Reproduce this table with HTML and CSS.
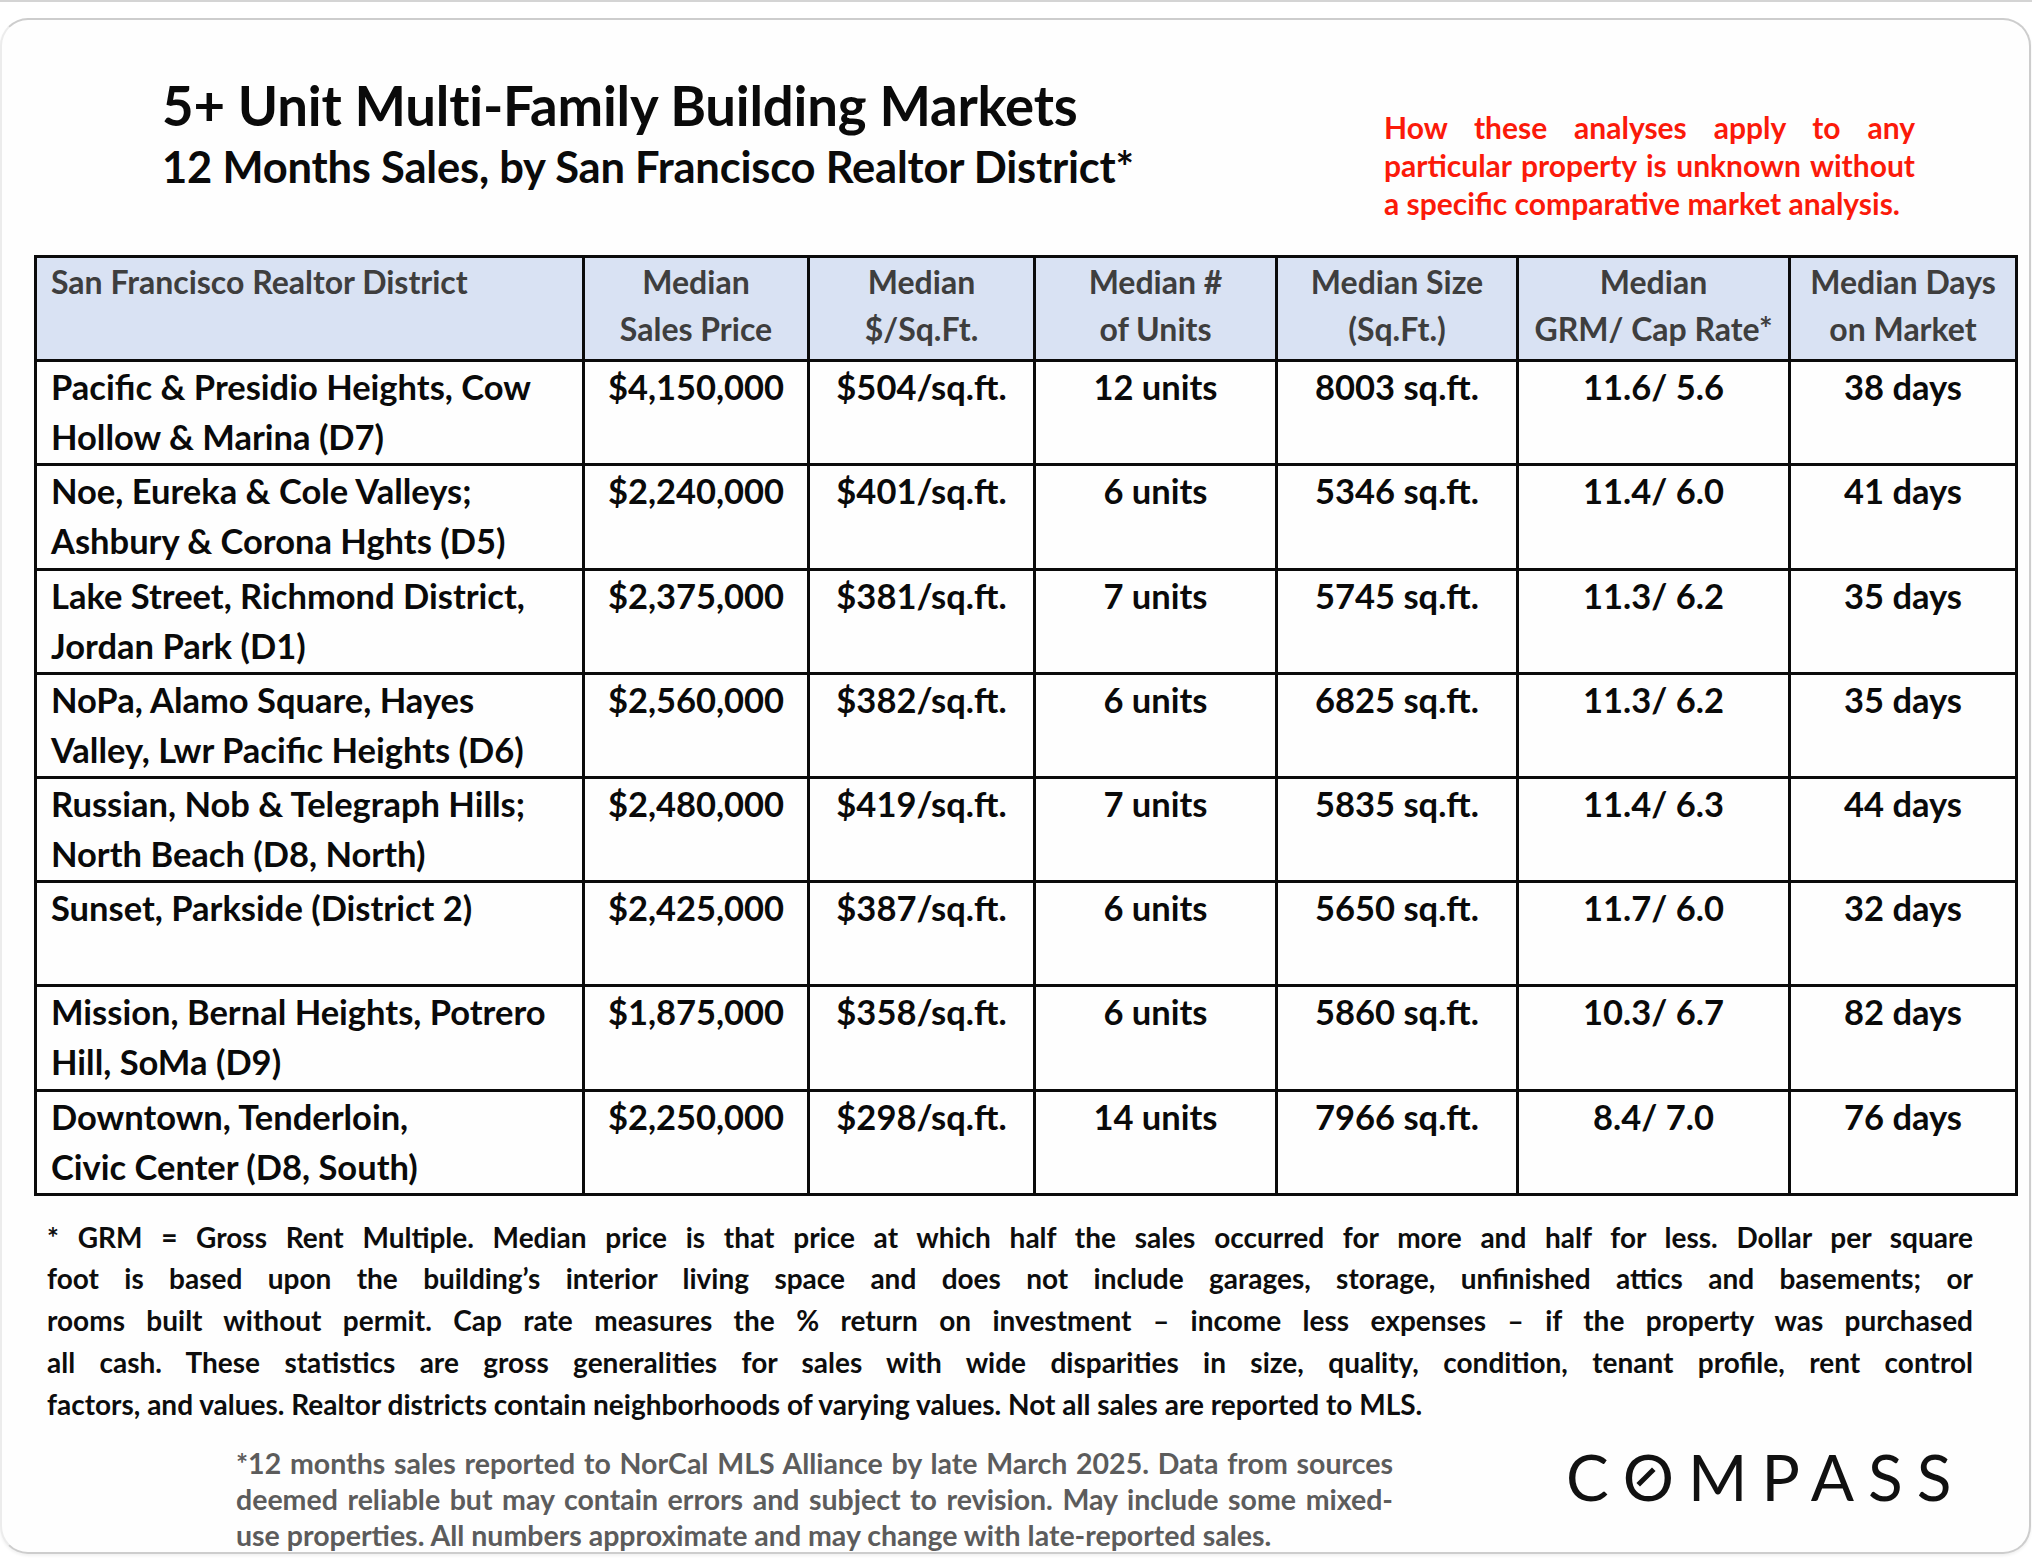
FILE: index.html
```html
<!DOCTYPE html>
<html lang="en">
<head>
<meta charset="utf-8">
<title>5+ Unit Multi-Family Building Markets</title>
<link rel="stylesheet" href="styles.css">
</head>
<body>
<div class="topline"></div>
<div class="card">
  <header class="head">
    <div class="titles">
      <h1 class="title">5+ Unit Multi-Family Building Markets</h1>
      <h2 class="subtitle">12 Months Sales, by San Francisco Realtor District*</h2>
    </div>
    <p class="note"><span class="jl">How these analyses apply to any</span><span class="jl">particular property is unknown without</span><span class="ll">a specific comparative market analysis.</span></p>
  </header>

  <table class="data">
    <colgroup>
      <col class="c1"><col class="c2"><col class="c3"><col class="c4"><col class="c5"><col class="c6"><col class="c7">
    </colgroup>
    <thead>
      <tr>
        <th class="dist">San Francisco Realtor District</th>
        <th>Median<br>Sales Price</th>
        <th>Median<br>$/Sq.Ft.</th>
        <th>Median #<br>of Units</th>
        <th>Median Size<br>(Sq.Ft.)</th>
        <th>Median<br>GRM/ Cap Rate*</th>
        <th>Median Days<br>on Market</th>
      </tr>
    </thead>
    <tbody>
      <tr><td class="dist">Pacific &amp; Presidio Heights, Cow<br>Hollow &amp; Marina (D7)</td><td>$4,150,000</td><td>$504/sq.ft.</td><td>12 units</td><td>8003 sq.ft.</td><td>11.6/ 5.6</td><td>38 days</td></tr>
      <tr><td class="dist">Noe, Eureka &amp; Cole Valleys;<br>Ashbury &amp; Corona Hghts (D5)</td><td>$2,240,000</td><td>$401/sq.ft.</td><td>6 units</td><td>5346 sq.ft.</td><td>11.4/ 6.0</td><td>41 days</td></tr>
      <tr><td class="dist">Lake Street, Richmond District,<br>Jordan Park (D1)</td><td>$2,375,000</td><td>$381/sq.ft.</td><td>7 units</td><td>5745 sq.ft.</td><td>11.3/ 6.2</td><td>35 days</td></tr>
      <tr><td class="dist">NoPa, Alamo Square, Hayes<br>Valley, Lwr Pacific Heights (D6)</td><td>$2,560,000</td><td>$382/sq.ft.</td><td>6 units</td><td>6825 sq.ft.</td><td>11.3/ 6.2</td><td>35 days</td></tr>
      <tr><td class="dist">Russian, Nob &amp; Telegraph Hills;<br>North Beach (D8, North)</td><td>$2,480,000</td><td>$419/sq.ft.</td><td>7 units</td><td>5835 sq.ft.</td><td>11.4/ 6.3</td><td>44 days</td></tr>
      <tr><td class="dist">Sunset, Parkside (District 2)</td><td>$2,425,000</td><td>$387/sq.ft.</td><td>6 units</td><td>5650 sq.ft.</td><td>11.7/ 6.0</td><td>32 days</td></tr>
      <tr><td class="dist">Mission, Bernal Heights, Potrero<br>Hill, SoMa (D9)</td><td>$1,875,000</td><td>$358/sq.ft.</td><td>6 units</td><td>5860 sq.ft.</td><td>10.3/ 6.7</td><td>82 days</td></tr>
      <tr><td class="dist">Downtown, Tenderloin,<br>Civic Center (D8, South)</td><td>$2,250,000</td><td>$298/sq.ft.</td><td>14 units</td><td>7966 sq.ft.</td><td>8.4/ 7.0</td><td>76 days</td></tr>
    </tbody>
  </table>

  <div class="fine">
    <span class="jl">* GRM = Gross Rent Multiple. Median price is that price at which half the sales occurred for more and half for less. Dollar per square</span>
    <span class="jl">foot is based upon the building’s interior living space and does not include garages, storage, unfinished attics and basements; or</span>
    <span class="jl">rooms built without permit. Cap rate measures the % return on investment – income less expenses – if the property was purchased</span>
    <span class="jl">all cash. These statistics are gross generalities for sales with wide disparities in size, quality, condition, tenant profile, rent control</span>
    <span class="ll">factors, and values. Realtor districts contain neighborhoods of varying values. Not all sales are reported to MLS.</span>
  </div>

  <footer class="foot">
    <div class="source">
      <span class="jl">*12 months sales reported to NorCal MLS Alliance by late March 2025. Data from sources</span>
      <span class="jl">deemed reliable but may contain errors and subject to revision. May include some mixed-</span>
      <span class="ll">use properties. All numbers approximate and may change with late-reported sales.</span>
    </div>
    <div class="logo">C<span class="o">O</span>MPASS</div>
  </footer>
</div>
</body>
</html>
```

FILE: styles.css
```css
html, body {
  margin: 0;
  padding: 0;
  background: #ffffff;
}

body {
  width: 2032px;
  height: 1566px;
  overflow: hidden;
  font-family: Lato, "Liberation Sans", sans-serif;
  color: #0a0a0a;
}

.topline {
  height: 2px;
  background: #d4d4d4;
}

.card {
  box-sizing: border-box;
  margin: 16px 1px 0 0;
  height: 1536px;
  border: 2px solid #cdcdcd;
  border-left-color: #ececec;
  border-radius: 28px;
  background: #fefefe;
  box-shadow: 0 2px 3px rgba(0, 0, 0, 0.06);
}

/* ---------- heading ---------- */
.head {
  display: flex;
  align-items: flex-start;
  padding: 54px 0 0 160px;
}

.titles {
  flex: 1;
}

.title {
  margin: 0;
  font-size: 54.5px;
  line-height: 62px;
  font-weight: 700;
  letter-spacing: -0.2px;
}

.subtitle {
  margin: 6px 0 0;
  font-size: 43.5px;
  line-height: 48px;
  font-weight: 700;
  letter-spacing: -0.2px;
}

.note {
  width: 531px;
  margin: 33.5px 114px 0 0;
  color: #fb1a0a;
  font-size: 30px;
  line-height: 38px;
  font-weight: 700;
}

.jl {
  display: block;
  text-align: justify;
  text-align-last: justify;
}

.ll {
  display: block;
  text-align: left;
}

/* ---------- table ---------- */
.data {
  margin: 33.5px 0 0 32px;
  width: 1981px;
  table-layout: fixed;
  border-collapse: collapse;
  border: 3px solid #0b0b0b;
}

.c1 { width: 548px; }
.c2 { width: 225px; }
.c3 { width: 226px; }
.c4 { width: 242px; }
.c5 { width: 241px; }
.c6 { width: 272px; }
.c7 { width: 227px; }

.data tr {
  height: 104.2px;
}

.data th,
.data td {
  border: 3px solid #0b0b0b;
  vertical-align: top;
  text-align: center;
  padding: 0;
  white-space: nowrap;
}

.data th {
  background: #d9e2f3;
  color: #3e3e3e;
  font-size: 32px;
  line-height: 47px;
  font-weight: 700;
}

.data td {
  font-size: 34.5px;
  line-height: 50px;
  font-weight: 700;
}

.data .dist {
  text-align: left;
  padding-left: 14px;
}

/* ---------- footnotes ---------- */
.fine {
  margin: 21px 56px 0 45px;
  font-size: 28px;
  line-height: 41.8px;
  font-weight: 700;
  color: #0d0d0d;
}

.foot {
  display: flex;
  align-items: flex-start;
  margin-top: 19px;
  padding-left: 234px;
}

.source {
  width: 1157px;
  font-size: 28.5px;
  line-height: 36px;
  font-weight: 700;
  color: #5c5c5c;
}

.logo {
  margin: 0 0 0 173px;
  font-size: 64px;
  line-height: 64px;
  font-weight: 400;
  letter-spacing: 14px;
  color: #111111;
}

.logo .o {
  position: relative;
  display: inline-block;
}

.logo .o::after {
  content: "";
  position: absolute;
  left: calc(50% - 9px);
  top: 50%;
  width: 5px;
  height: 22px;
  background: #111111;
  transform: translate(-50%, -50%) rotate(45deg);
}
```
